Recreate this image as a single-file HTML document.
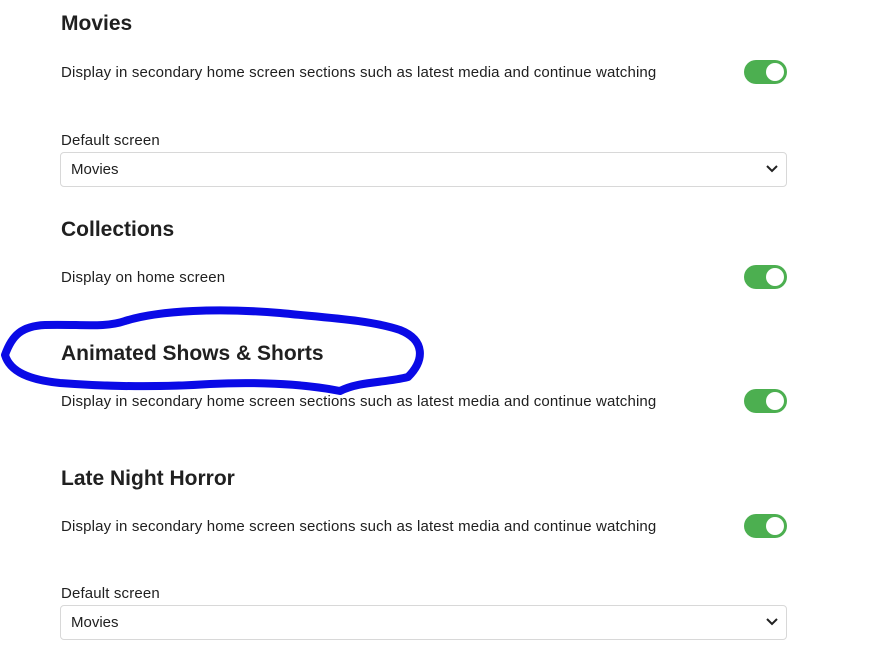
<!DOCTYPE html>
<html><head><style>
body{margin:0;width:874px;height:657px;background:#fff;font-family:"Liberation Sans",sans-serif;color:#202020;position:relative;overflow:hidden}
.a{position:absolute;left:61px;white-space:nowrap}
h2{margin:0;font-size:21px;font-weight:bold;position:absolute;left:61px;line-height:24px}
.t{font-size:15px;line-height:18px;letter-spacing:0.15px}
.tg{position:absolute;left:744px;width:43px;height:24px;border-radius:12px;background:#4caf50}
.tg:after{content:"";position:absolute;right:3px;top:3px;width:18px;height:18px;border-radius:50%;background:#fff}
.sel{position:absolute;left:60px;width:725px;height:33px;border:1px solid #d8d8d8;border-radius:4px;font-size:15px}
.sel span{position:absolute;left:10px;top:8px}
.sel svg{position:absolute;right:8px;top:11px}
</style></head><body>
<h2 style="top:12px">Movies</h2>
<div class="a t" style="top:64px">Display in secondary home screen sections such as latest media and continue watching</div>
<div class="tg" style="top:60px"></div>
<div class="a t" style="top:132px">Default screen</div>
<div class="sel" style="top:152px"><span>Movies</span><svg width="12" height="10" viewBox="0 0 12 10"><path d="M1 2l5 5 5-5" fill="none" stroke="#222" stroke-width="2"/></svg></div>
<h2 style="top:218px">Collections</h2>
<div class="a t" style="top:269px">Display on home screen</div>
<div class="tg" style="top:265px"></div>
<h2 style="top:342px">Animated Shows &amp; Shorts</h2>
<div class="a t" style="top:393px">Display in secondary home screen sections such as latest media and continue watching</div>
<div class="tg" style="top:389px"></div>
<h2 style="top:467px">Late Night Horror</h2>
<div class="a t" style="top:518px">Display in secondary home screen sections such as latest media and continue watching</div>
<div class="tg" style="top:514px"></div>
<div class="a t" style="top:585px">Default screen</div>
<div class="sel" style="top:605px"><span>Movies</span><svg width="12" height="10" viewBox="0 0 12 10"><path d="M1 2l5 5 5-5" fill="none" stroke="#222" stroke-width="2"/></svg></div>
<svg style="position:absolute;left:0;top:0" width="874" height="657"><path d="M5 355 C12 335 22 326 45 325 C80 324 105 328 125 321 C160 310 220 308 280 313 C330 318 370 320 400 330 C425 340 425 360 408 377 C385 383 360 381 340 391 C300 383 250 382 210 384 C150 388 100 386 60 383 C30 380 10 372 5 355 Z" fill="none" stroke="#0a0ae6" stroke-width="8" stroke-linejoin="round"/></svg>
</body></html>
